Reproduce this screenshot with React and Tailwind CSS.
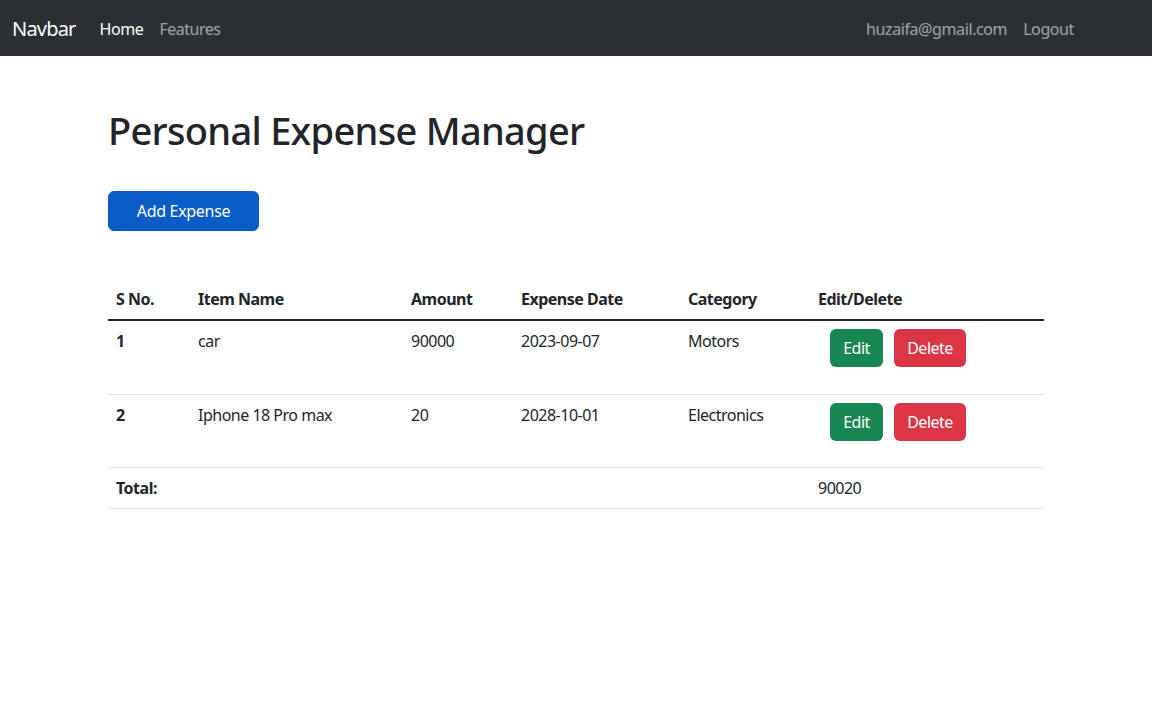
import React from 'react';

const expenses = [
  { id: 1, name: 'car', amount: 90000, date: '2023-09-07', category: 'Motors' },
  { id: 2, name: 'Iphone 18 Pro max', amount: 20, date: '2028-10-01', category: 'Electronics' },
];

export default function App() {
  const total = expenses.reduce((s, e) => s + e.amount, 0);
  return (
    <div className="min-h-screen bg-white text-[#212529] font-['Noto_Sans',sans-serif] text-base">
      <nav className="h-14 bg-[#2b3035] flex items-center pl-3 pr-[78px] pt-[2px]">
        <span className="text-white text-xl mr-6 tracking-[-0.8px]">Navbar</span>
        <a className="text-white mr-4 tracking-[-0.4px]">Home</a>
        <a className="text-white/55 tracking-[-0.5px]">Features</a>
        <div className="ml-auto flex items-center gap-4 text-white/55 tracking-[-0.4px]">
          <span>huzaifa@gmail.com</span>
          <span>Logout</span>
        </div>
      </nav>

      <div className="w-[936px] mx-auto">
        <h1 className="mt-[50px] text-[38px] leading-[48px] font-medium tracking-[-0.7px]">
          Personal Expense Manager
        </h1>
        <button className="mt-[37px] w-[151px] h-10 rounded-md bg-[#0a5cc8] border border-[#0a58ca] text-white tracking-[-0.3px]">
          Add Expense
        </button>

        <table className="mt-12 w-full border-collapse text-left tracking-[-0.5px]">
          <thead>
            <tr className="border-b-2 border-[#212529]">
              <th className="w-[82px] px-2 h-[41px] font-bold">S No.</th>
              <th className="w-[213px] px-2 font-bold">Item Name</th>
              <th className="w-[110px] px-2 font-bold">Amount</th>
              <th className="w-[167px] px-2 font-bold">Expense Date</th>
              <th className="w-[130px] px-2 font-bold">Category</th>
              <th className="px-2 font-bold">Edit/Delete</th>
            </tr>
          </thead>
          <tbody>
            {expenses.map((e, i) => (
              <tr key={e.id} className={`border-b border-[#dee2e6] align-top ${i === 0 ? 'h-[74px]' : 'h-[73px]'}`}>
                <td className="px-2 py-2 font-bold">{e.id}</td>
                <td className="px-2 py-2">{e.name}</td>
                <td className="px-2 py-2">{e.amount}</td>
                <td className="px-2 py-2">{e.date}</td>
                <td className="px-2 py-2">{e.category}</td>
                <td className="px-2 py-2">
                  <div className="flex gap-[11px] pl-3">
                    <button className="h-[38px] w-[53px] rounded-md bg-[#198754] text-white">Edit</button>
                    <button className="h-[38px] w-[72px] rounded-md bg-[#dc3545] text-white">Delete</button>
                  </div>
                </td>
              </tr>
            ))}
            <tr className="border-b border-[#dee2e6] h-[41px]">
              <td className="px-2 font-bold">Total:</td>
              <td></td>
              <td></td>
              <td></td>
              <td></td>
              <td className="px-2">{total}</td>
            </tr>
          </tbody>
        </table>
      </div>
    </div>
  );
}
